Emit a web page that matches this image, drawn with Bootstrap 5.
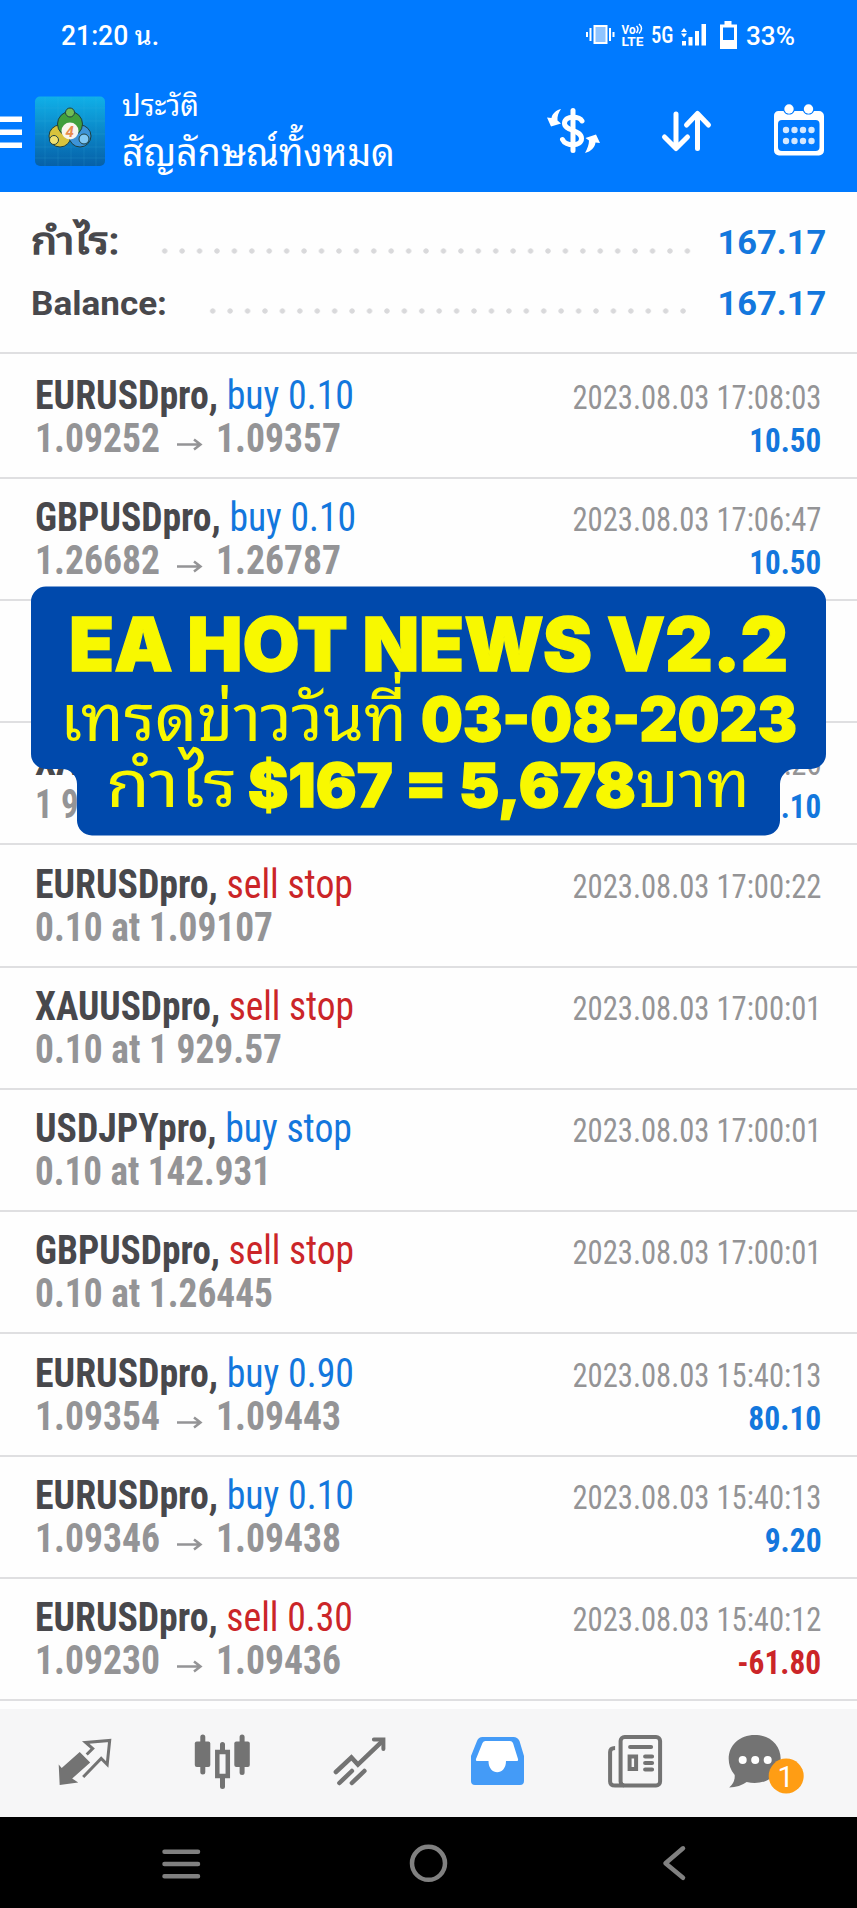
<!DOCTYPE html>
<html lang="th">
<head>
<meta charset="utf-8">
<meta name="viewport" content="width=device-width, initial-scale=1">
<title>History</title>
<link href="https://cdn.jsdelivr.net/npm/bootstrap@5.3.0/dist/css/bootstrap.min.css" rel="stylesheet">
<script src="https://cdn.jsdelivr.net/npm/bootstrap@5.3.0/dist/js/bootstrap.bundle.min.js"></script>
<style>
body{width:857px;height:1908px;overflow:hidden;background:#fefefe;font-family:Roboto,"Noto Sans Thai Looped",Loma,"Noto Sans Thai","Noto Sans",sans-serif;color:#48484c}
svg{display:block;flex:none}
.fit{display:inline-block;flex:none;white-space:nowrap;transform-origin:0 50%}
.fit-end{transform-origin:100% 50%}
.app-head{height:191.7px;background:#007aff;color:#fff}
.status{height:72px;padding:0 58px 0 60.5px;font-size:27px;line-height:72px}
.toolbar{height:119px}
.head-text{margin-left:15.5px;padding-top:15.5px}
.sub{font-size:30px;line-height:36px;height:41px}
.ttl{font-size:39px;line-height:48px}
.summary{height:162.3px;padding:20px 31px 0;border-bottom:2px solid #dfdfe1;font-size:34px;font-weight:700}
.sum-line{height:60.7px;line-height:60px}
.sum-thai{font-size:36px;font-weight:400;-webkit-text-stroke:1.4px #48484c}
.dots{height:6px;background:radial-gradient(circle at 50% 50%,#d9d9db 2.3px,transparent 3px) 0 0/17.43px 6px repeat-x;margin-top:17px}
.blue{color:#1377dd}.red{color:#cb2528}
.deal{height:122.24px;padding:17.3px 35.5px 0 34.5px;border-bottom:2px solid #dfdfe1}
.deal:first-child{height:124.7px;padding-top:19.6px}
.cond{font-family:"Roboto Condensed",Roboto,sans-serif;font-stretch:75%}
.l1{height:44px;font-size:40px;line-height:44px}
.l2{height:43px;font-size:40px;line-height:41px;color:#949496;font-weight:700}
.when{font-size:33px;line-height:36px;color:#949496}
.gain{font-size:33px;line-height:36px;font-weight:700}
.promo{position:absolute;left:31px;top:586px;width:795px;height:250px;color:#f8f800;font-family:Inter,sans-serif;font-weight:900}
.promo svg{position:absolute;left:0;top:0}
.promo-line{position:relative;white-space:nowrap;font-size:60px;line-height:80px;height:70px;-webkit-text-stroke:1.3px #f8f800}
.promo-top{font-size:74px;height:89px;padding:18px 0 0 38px}
.promo-mid{padding:3.5px 0 0 29px}
.promo-low{padding-left:75px}
.thai{font-size:65px;line-height:60px;font-weight:400;font-family:"Noto Sans Thai Looped",Loma,"Noto Sans Thai","Noto Sans",sans-serif;-webkit-text-stroke:0}
.tabs{height:107.3px;margin-top:8.3px;background:#f6f6f7;color:#737373}
.sysnav{height:92px;background:#000}
</style>
</head>
<body>
<header class="app-head">
  <div class="status d-flex justify-content-between">
    <span class="fit fw-medium" data-w="98">21:20 น.</span>
    <svg width="220" height="72" viewBox="580 0 220 72" fill="#fff">
      <path d="M587 32h2v5h-2zM590.5 28h2v13h-2zM610 28h2v13h-2zM613.5 32h2v5h-2z"/>
      <rect x="595.5" y="26" width="12" height="17" fill="#8fc4ff" stroke="#fff" stroke-width="2"/>
      <text x="622.5" y="33.5" font-size="12.500" font-weight="700" textLength="14" lengthAdjust="spacingAndGlyphs">Vo</text>
      <path d="M637.500 26q3 3 0 7M640 24q5 4 0 9.500" fill="none" stroke="#fff" stroke-width="1.500"/>
      <text x="622.500" y="45.500" font-size="13.500" font-weight="700" textLength="22" lengthAdjust="spacingAndGlyphs">LTE</text>
      <text x="652" y="43" font-size="23" font-weight="500" textLength="22.500" lengthAdjust="spacingAndGlyphs" class="cond">5G</text>
      <path d="M682 32l3-4 3 4zM682 33.500h6l-3 4zM683 41h4v4.500h-4zM689.500 37h4v8.500h-4zM696 31h4v14.500h-4zM702.500 24h4.500v21.500h-4.500z"/>
      <path fill-rule="evenodd" d="M725.500 21h7v3.500h5.500v24.500h-17v-24.500h4.500zM724 27.500v12.500h11v-12.500z"/>
      <text x="747" y="45" font-size="26" font-weight="500" textLength="49" lengthAdjust="spacingAndGlyphs">33%</text>
    </svg>
  </div>
  <div class="toolbar d-flex">
    <svg width="106" height="119" viewBox="0 72 106 119">
      <defs><linearGradient id="sky" x1="0" y1="0" x2="0" y2="1"><stop offset="0" stop-color="#10b0e8"/><stop offset="1" stop-color="#0660a8"/></linearGradient></defs>
      <path d="M0 116.500h22v5.500H0zM0 129.500h22v5.500H0zM0 142.500h22v5.500H0z" fill="#fff"/>
      <rect x="35" y="96.500" width="70" height="69.500" rx="5" fill="url(#sky)"/>
      <path d="M45 97v69M58 97v69M71 97v69M84 97v69M96 97v69M35 108h70M35 121h70M35 134h70M35 147h70M35 158h70" stroke="#4cc3ee" stroke-opacity=".15" fill="none"/>
      <g stroke="#1d3f40" stroke-width="1">
        <circle cx="60" cy="136" r="11" fill="#d8c33c"/><circle cx="80" cy="136" r="11" fill="#3d94d8"/><circle cx="70" cy="124" r="12.500" fill="#3f9f3c"/>
        <circle cx="70" cy="112.500" r="4.500" fill="#70bd55"/><circle cx="54" cy="140" r="4.500" fill="#f0e070"/><circle cx="84" cy="139" r="5" fill="#80c8f4"/>
      </g>
      <circle cx="70" cy="131" r="8.500" fill="#f8f5ee"/>
      <text x="65.500" y="136.500" font-size="15" font-weight="700" font-style="italic" fill="#e88b4b">4</text>
    </svg>
    <div class="head-text">
      <div class="sub"><span class="fit" data-w="77">ประวัติ</span></div>
      <div class="ttl"><span class="fit" data-w="273">สัญลักษณ์ทั้งหมด</span></div>
    </div>
    <svg class="ms-auto" width="322" height="119" viewBox="535 72 322 119" fill="none" stroke="#fff" stroke-linecap="round" stroke-linejoin="round">
      <path d="M573 110.500v40" stroke-width="5"/>
      <path d="M582 121c-2.500-4.500-17-6-17.500 2c-.5 8 17 6.500 17 15.500c0 8.500-16 8-19 1" stroke-width="5"/>
      <path d="M561 109c-5 1-9 5-9.500 9l-4.500-.5 4 9 10-3-3.500-3c-.5-4 1-8 3.500-11.500zM585 153c6-1.500 10-5.500 10.500-10.500l4.500.5-4-8.500-10.500 3.500 3.500 2.500c0 4-1.500 8-4 12.500z" fill="#fff" stroke="none"/>
      <path d="M676 114v34M664.500 137l11.500 11.500 11.500-11.500M697.500 148.500V114M686.500 125l11-11.500 11 11.500" stroke-width="5"/>
      <path d="M779 111h4.500a6 6 0 0 0 11 0h8.500a6 6 0 0 0 11 0h5a5 5 0 0 1 5 5v34.500a5 5 0 0 1-5 5h-40a5 5 0 0 1-5-5V116a5 5 0 0 1 4-5z" fill="#fff" stroke="none"/>
      <rect x="778" y="120" width="41.500" height="31" rx="4" fill="#007aff" stroke="none"/>
      <g fill="#fff" stroke="none"><circle cx="789" cy="109" r="4.700"/><circle cx="808.500" cy="109" r="4.700"/></g>
      <g fill="#d4e8ff" stroke="none"><circle cx="786" cy="130" r="3.200"/><circle cx="794.500" cy="130" r="3.200"/><circle cx="803" cy="130" r="3.200"/><circle cx="811.500" cy="130" r="3.200"/><circle cx="786" cy="141" r="3.200"/><circle cx="794.500" cy="141" r="3.200"/><circle cx="803" cy="141" r="3.200"/><circle cx="811.500" cy="141" r="3.200"/></g>
    </svg>
  </div>
</header>

<section class="summary">
  <div class="sum-line d-flex align-items-center">
    <span class="fit sum-thai" data-w="88">กำไร:</span><div class="dots flex-grow-0" style="width:536px;margin-left:37px"></div><span class="flex-grow-1"></span><span class="fit blue fit-end" data-w="109">167.17</span>
  </div>
  <div class="sum-line d-flex align-items-center">
    <span class="fit" data-w="136">Balance:</span><div class="dots flex-grow-0" style="width:489px;margin-left:37px"></div><span class="flex-grow-1"></span><span class="fit blue fit-end" data-w="109">167.17</span>
  </div>
</section>

<main id="deals" class="cond"></main>

<nav class="tabs d-flex justify-content-center">
  <svg width="137.400" height="107" viewBox="17.300 1709 137.400 107" fill="none" stroke="currentColor" stroke-width="3">
    <path d="M60 1764.500l3 3.500 18-16 10.500 10.500-18 16 6 4-18.500 2.500z" fill="currentColor" stroke="none"/>
    <path d="M88 1754.500l6-6-7-6 24-2-2.500 24-6-6-18 18.500"/>
  </svg>
  <svg width="137.400" height="107" viewBox="154.700 1709 137.400 107" fill="none" stroke="currentColor">
    <path d="M203.500 1737v35M242.800 1737v35.500M223.200 1744.500v7M223.200 1777v9.500" stroke-width="5" stroke-linecap="round"/>
    <rect x="195.500" y="1741.500" width="15.500" height="25.500" rx="2" fill="currentColor" stroke="none"/><rect x="235" y="1741.500" width="15.500" height="25.500" rx="2" fill="currentColor" stroke="none"/>
    <rect x="218" y="1752" width="10.500" height="24" stroke-width="4.500"/>
  </svg>
  <svg width="137.400" height="107" viewBox="292.100 1709 137.400 107" fill="none" stroke="currentColor" stroke-width="4.500" stroke-linecap="round">
    <path d="M337 1772l15.500-14.500 6.500 7 24-23M340.500 1783l12.500-12M353 1783l12.500-12"/><path d="M375 1739.500h9.500v9.500" stroke-width="4" stroke-linejoin="miter"/><path d="M378 1739h7v7z" fill="currentColor" stroke="none"/>
  </svg>
  <svg width="137.400" height="107" viewBox="429.500 1709 137.400 107" fill="#449bf7">
    <path d="M483 1737h31q4 0 6 4l4.500 15v25q0 4-4 4h-45q-4 0-4-4v-25l6-15q1.500-4 5.500-4z"/>
    <path d="M486 1741q-2 0-3 2l-6.500 16q-.5 2 1 2h11.500c0 15 17.500 15 17.500 0h11q1.500 0 1-2l-5-16q-1-2-3-2z" fill="#fff"/>
  </svg>
  <svg width="137.400" height="107" viewBox="566.900 1709 137.400 107" fill="none" stroke="currentColor" stroke-width="4">
    <rect x="621.500" y="1737" width="39.500" height="48.500" rx="4"/>
    <path d="M616 1748q-5 0-5 4v29.500q0 4 5 4h9" /><path d="M631 1747h21M646 1756.500h7M646 1763h7M646 1769.500h7" stroke-linecap="round"/><rect x="630.500" y="1756.500" width="6.500" height="12.500"/>
  </svg>
  <svg width="137.400" height="107" viewBox="704.300 1709 137.400 107">
    <path d="M756 1735c15 0 26 10 26 24s-11 24-26 24q-4 0-8-1-7 5-17.500 5.500 6-5 5.500-12.500-6-7-6-16c0-14 11-24 26-24z" fill="currentColor"/>
    <g fill="#fff"><circle cx="744" cy="1760" r="4"/><circle cx="756.500" cy="1760" r="4"/><circle cx="769" cy="1760" r="4"/></g>
    <circle cx="787.500" cy="1776" r="17.500" fill="#ff9d14"/>
    <text x="787" y="1787.500" text-anchor="middle" font-size="29" font-family="Roboto" fill="#fff">1</text>
  </svg>
</nav>
<footer class="sysnav">
  <svg width="857" height="92" viewBox="0 1816 857 92" fill="none" stroke="#808080" stroke-width="4.500" stroke-linecap="round" stroke-linejoin="round">
    <path d="M164.500 1850.700h33.500M164.500 1863h33.500M164.500 1875.300h33.500"/>
    <circle cx="428.500" cy="1862.300" r="16.500"/>
    <path d="M683 1847.300l-17.500 15 17.500 14.500"/>
  </svg>
</footer>

<div class="promo">
  <svg width="795" height="250" viewBox="31 586 795 250"><path fill="#0049ac" d="M46 586.500H811a15 15 0 0 1 15 15V754a15 15 0 0 1-15 15h-16a15 15 0 0 0-15 15v36.500a15 15 0 0 1-15 15H92a15 15 0 0 1-15-15V784a15 15 0 0 0-15-15h-16a15 15 0 0 1-15-15V601.500a15 15 0 0 1 15-15z"/></svg>
  <div class="promo-line promo-top"><span class="fit" data-w="719">EA HOT NEWS V2.2</span></div>
  <div class="promo-line promo-mid d-flex align-items-baseline"><span class="fit thai" data-w="347">เทรดข่าววันที่</span><span class="fit" style="margin-left:14px" data-w="376">03-08-2023</span></div>
  <div class="promo-line promo-low d-flex align-items-baseline"><span class="fit thai" data-w="131">กำไร</span><span class="fit" style="margin-left:11px" data-w="388">$167 = 5,678</span><span class="fit thai" data-w="114">บาท</span></div>
</div>

<script>
// symbol, side, blue?, title width, detail, detail width or second price, time, result, result width
const deals = [
  ['EURUSDpro','buy 0.10',1,319,'1.09252','1.09357','17:08:03','10.50',72],
  ['GBPUSDpro','buy 0.10',1,321,'1.26682','1.26787','17:06:47','10.50',72],
  null,
  ['XAUUSDpro','buy 0.10',1,321,'1 934.47','1 937.48','17:05:26','30.10',72],
  ['EURUSDpro','sell stop',0,318,'0.10 at 1.09107',238,'17:00:22'],
  ['XAUUSDpro','sell stop',0,319,'0.10 at 1 929.57',247,'17:00:01'],
  ['USDJPYpro','buy stop',1,317,'0.10 at 142.931',236,'17:00:01'],
  ['GBPUSDpro','sell stop',0,319,'0.10 at 1.26445',238,'17:00:01'],
  ['EURUSDpro','buy 0.90',1,319,'1.09354','1.09443','15:40:13','80.10',73],
  ['EURUSDpro','buy 0.10',1,319,'1.09346','1.09438','15:40:13','9.20',57],
  ['EURUSDpro','sell 0.30',0,318,'1.09230','1.09436','15:40:12','-61.80',84]
];
document.getElementById('deals').innerHTML = deals.map(d => {
  if (!d) return '<article class="deal"></article>';
  const gain = d[7];
  const detail = gain
    ? `<div class="d-flex align-items-baseline"><span class="fit" data-w="125">${d[4]}</span><svg width="56" height="20" viewBox="0 0 56 20" fill="none" stroke="#949496" stroke-width="2.500"><path d="M17 12.500h23M34 7.500l6.500 5-6.500 5"/></svg><span class="fit" data-w="125">${d[5]}</span></div>`
    : `<span class="fit" data-w="${d[5]}">${d[4]}</span>`;
  return `<article class="deal">
    <div class="l1 d-flex justify-content-between align-items-baseline"><span class="fit" data-w="${d[3]}"><b>${d[0]},</b> <span class="${d[2]?'blue':'red'}">${d[1]}</span></span><span class="when fit fit-end" data-w="249">2023.08.03 ${d[6]}</span></div>
    <div class="l2 d-flex justify-content-between align-items-baseline">${detail}${gain?`<span class="gain fit fit-end ${gain[0]==='-'?'red':'blue'}" data-w="${d[8]}">${gain}</span>`:''}</div>
  </article>`;
}).join('');
// Condense each run of text to its column width
document.querySelectorAll('.fit').forEach(e => {
  const w = +e.dataset.w, n = e.getBoundingClientRect().width;
  e.style.transform = `scaleX(${w / n})`;
  if (e.classList.contains('fit-end')) e.style.marginLeft = (w - n) + 'px';
  else e.style.marginRight = (w - n) + 'px';
});
</script>
</body>
</html>
